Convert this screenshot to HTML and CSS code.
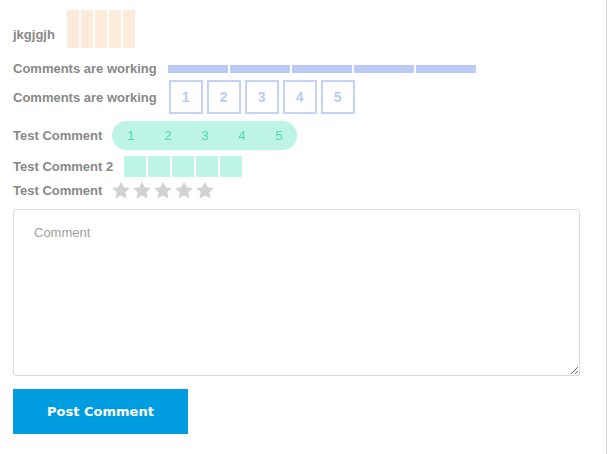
FILE: index.html
```html
<!DOCTYPE html>
<html lang="en">
<head>
<meta charset="utf-8">
<title>Comments</title>
<link rel="stylesheet" href="styles.css">
</head>
<body>
<div class="page">
  <div class="row row-first">
    <span class="label">jkgjgjh</span>
    <div class="tall-swatches">
      <span></span><span></span><span></span><span></span><span></span>
    </div>
  </div>

  <div class="row row-bar">
    <span class="label">Comments are working</span>
    <div class="bar">
      <span></span><span></span><span></span><span></span><span></span>
    </div>
  </div>

  <div class="row row-boxes">
    <span class="label">Comments are working</span>
    <div class="numboxes">
      <span>1</span><span>2</span><span>3</span><span>4</span><span>5</span>
    </div>
  </div>

  <div class="row row-pill">
    <span class="label">Test Comment</span>
    <div class="pill">
      <span>1</span><span>2</span><span>3</span><span>4</span><span>5</span>
    </div>
  </div>

  <div class="row row-small">
    <span class="label">Test Comment 2</span>
    <div class="small-swatches">
      <span></span><span></span><span></span><span></span><span></span>
    </div>
  </div>

  <div class="row row-stars">
    <span class="label">Test Comment</span>
    <div class="stars">
      <svg viewBox="0 0 24 22"><path d="M12 0.8l3.3 6.9 7.5 1-5.5 5.2 1.4 7.5L12 17.8l-6.7 3.6 1.4-7.5-5.5-5.2 7.5-1z"/></svg>
      <svg viewBox="0 0 24 22"><path d="M12 0.8l3.3 6.9 7.5 1-5.5 5.2 1.4 7.5L12 17.8l-6.7 3.6 1.4-7.5-5.5-5.2 7.5-1z"/></svg>
      <svg viewBox="0 0 24 22"><path d="M12 0.8l3.3 6.9 7.5 1-5.5 5.2 1.4 7.5L12 17.8l-6.7 3.6 1.4-7.5-5.5-5.2 7.5-1z"/></svg>
      <svg viewBox="0 0 24 22"><path d="M12 0.8l3.3 6.9 7.5 1-5.5 5.2 1.4 7.5L12 17.8l-6.7 3.6 1.4-7.5-5.5-5.2 7.5-1z"/></svg>
      <svg viewBox="0 0 24 22"><path d="M12 0.8l3.3 6.9 7.5 1-5.5 5.2 1.4 7.5L12 17.8l-6.7 3.6 1.4-7.5-5.5-5.2 7.5-1z"/></svg>
    </div>
  </div>

  <textarea class="comment" placeholder="Comment"></textarea>

  <button class="submit" type="button">Post Comment</button>
</div>
</body>
</html>
```

FILE: styles.css
```css
html, body {
  margin: 0;
  padding: 0;
  background: #fff;
}

.page {
  box-sizing: border-box;
  width: 607px;
  min-height: 454px;
  padding: 10px 0 0 13px;
  border-right: 1px solid #d4d4d4;
  font-family: "Liberation Sans", Arial, sans-serif;
}

.row {
  display: flex;
  align-items: center;
}

.label {
  font-size: 13px;
  font-weight: 700;
  line-height: 15px;
  color: #888;
  white-space: nowrap;
}

/* row 1 */
.row-first {
  align-items: flex-start;
}
.row-first .label {
  margin-top: 17px;
}
.tall-swatches {
  display: flex;
  gap: 2px;
  margin-left: 12px;
}
.tall-swatches span {
  width: 12px;
  height: 38px;
  background: #fdebd9;
}

/* row 2 */
.row-bar {
  margin-top: 13px;
}
.bar {
  display: flex;
  gap: 2px;
  margin-left: 11px;
}
.bar span {
  width: 60px;
  height: 8px;
  background: #b9cbf6;
}

/* row 3 */
.row-boxes {
  margin-top: 4px;
}
.numboxes {
  display: flex;
  gap: 4px;
  margin-left: 12px;
}
.numboxes span {
  box-sizing: border-box;
  width: 34px;
  height: 34px;
  border: 2px solid #c3d3f8;
  display: flex;
  align-items: center;
  justify-content: center;
  font-size: 14px;
  font-weight: 700;
  color: #b9cbf6;
}

/* row 4 */
.row-pill {
  margin-top: 7px;
}
.pill {
  display: flex;
  height: 29px;
  margin-left: 10px;
  border-radius: 15px;
  background: #bdf4e5;
}
.pill span {
  width: 37px;
  display: flex;
  align-items: center;
  justify-content: center;
  font-size: 13px;
  color: #52d9b0;
}

/* row 5 */
.row-small {
  margin-top: 6px;
}
.small-swatches {
  display: flex;
  gap: 2px;
  margin-left: 11px;
}
.small-swatches span {
  width: 22px;
  height: 21px;
  background: #bdf4e5;
}

/* row 6 */
.row-stars {
  margin-top: 4px;
}
.stars {
  display: flex;
  gap: 1px;
  margin-left: 9px;
}
.stars svg {
  width: 20px;
  height: 18px;
  fill: #d2d2d2;
}

/* textarea */
.comment {
  display: block;
  box-sizing: border-box;
  width: 567px;
  height: 167px;
  margin-top: 10px;
  padding: 15px 20px;
  border: 1px solid #dcdcdc;
  border-radius: 3px;
  font-family: "Liberation Sans", Arial, sans-serif;
  font-size: 13px;
  color: #555;
  background: #fff;
  outline: none;
}
.comment::placeholder {
  color: #a0a0a0;
}

/* button */
.submit {
  display: block;
  width: 175px;
  height: 45px;
  margin-top: 13px;
  padding: 0;
  border: none;
  background: #009de0;
  color: #fff;
  font-family: "DejaVu Sans", sans-serif;
  font-size: 13px;
  font-weight: 700;
  cursor: pointer;
}
```
